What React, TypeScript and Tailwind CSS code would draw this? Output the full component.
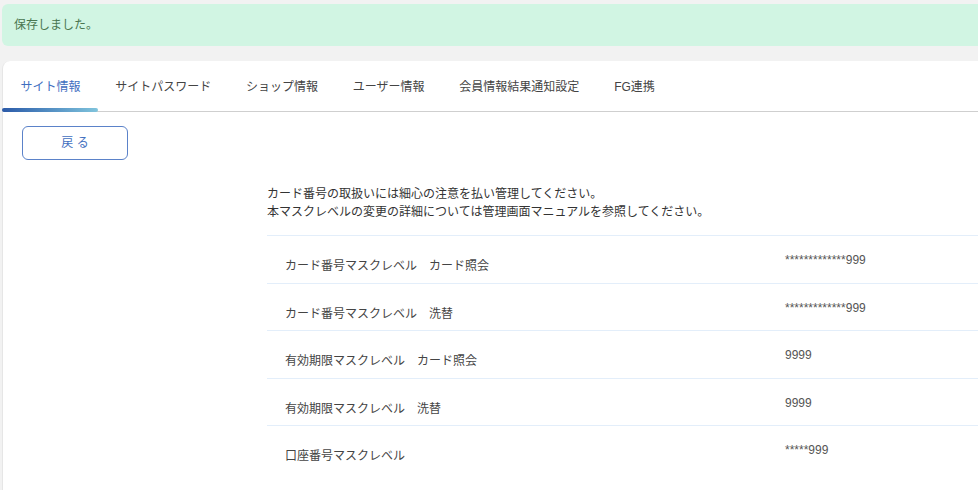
import React from "react";

const tabs = [
  "サイト情報",
  "サイトパスワード",
  "ショップ情報",
  "ユーザー情報",
  "会員情報結果通知設定",
  "FG連携",
];

const rows = [
  { label: "カード番号マスクレベル　カード照会", value: "*************999" },
  { label: "カード番号マスクレベル　洗替", value: "*************999" },
  { label: "有効期限マスクレベル　カード照会", value: "9999" },
  { label: "有効期限マスクレベル　洗替", value: "9999" },
  { label: "口座番号マスクレベル", value: "*****999" },
];

export default function App() {
  return (
    <div className="min-h-screen bg-[#f2f2f2] pl-[2px] pt-[4px] font-['Liberation_Sans','Noto_Sans_CJK_JP',sans-serif] text-[12px]">
      {/* 保存メッセージ */}
      <div className="flex h-[42px] items-center rounded-l-md bg-[#d1f5e3] pl-[12px] text-[#4a7650]">
        保存しました。
      </div>

      {/* カード */}
      <div className="mt-[15px] min-h-[429px] rounded-tl-lg border-l border-[#e6e6e6] bg-white">
        {/* タブ */}
        <div className="flex h-[51px] border-b border-[#cfcfcf]">
          {tabs.map((t, i) => (
            <div
              key={t}
              className={
                i === 0
                  ? "relative flex items-center px-[17.4px] pt-[1px] text-[#3f6fbf]"
                  : "relative flex items-center px-[17.4px] pt-[1px] text-[#444]"
              }
            >
              {t}
              {i === 0 && (
                <span className="absolute bottom-[-1px] left-[-1px] right-0 h-[4px] rounded-full bg-gradient-to-r from-[#2c5aa8] to-[#80c4dc]" />
              )}
            </div>
          ))}
        </div>

        <div className="pl-[19px] pt-[14px]">
          <button className="h-[34px] w-[106px] rounded-md border border-[#5b82c9] text-[12px] text-[#4270c0]">
            戻 る
          </button>
        </div>

        <div className="pl-[264px]">
          <div className="mt-[25px] leading-[18px] text-[#333]">
            <p>カード番号の取扱いには細心の注意を払い管理してください。</p>
            <p>本マスクレベルの変更の詳細については管理画面マニュアルを参照してください。</p>
          </div>

          <div className="mt-[14px]">
            {rows.map((r) => (
              <div
                key={r.label}
                className="grid h-[47.5px] grid-cols-[518px_1fr] border-t border-[#e3eefa] leading-[18px]"
              >
                <div className="pl-[18px] pt-[21px] text-[#444]">{r.label}</div>
                <div className="pt-[15px] text-[#555]">{r.value}</div>
              </div>
            ))}
          </div>
        </div>
      </div>
    </div>
  );
}
